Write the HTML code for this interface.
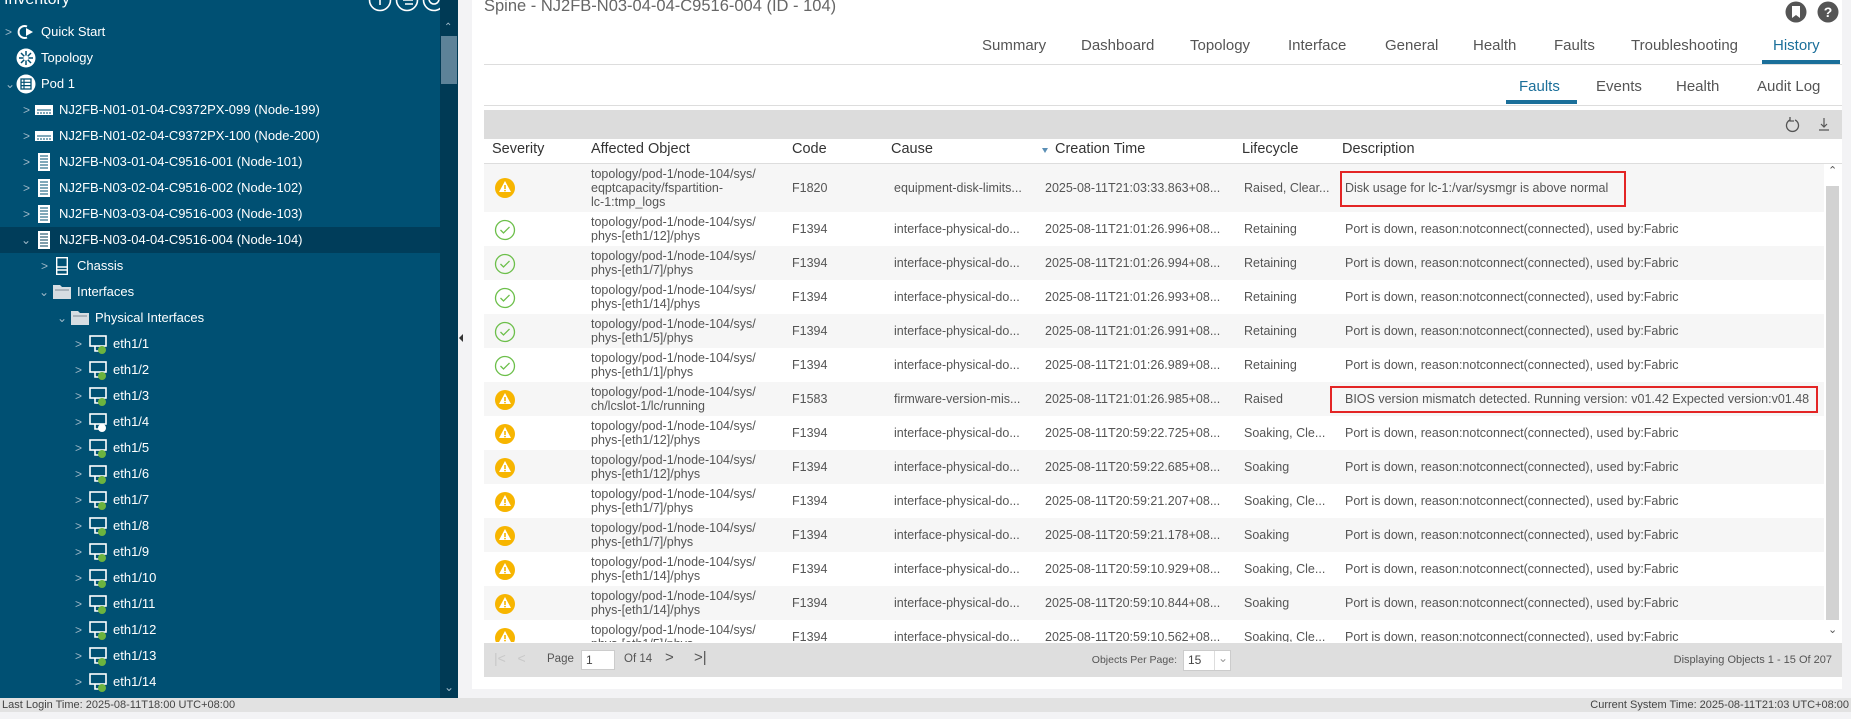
<!DOCTYPE html>
<html><head><meta charset="utf-8">
<style>
*{margin:0;padding:0;box-sizing:border-box}
body{width:1851px;height:719px;overflow:hidden;background:#f3f3f5;font-family:"Liberation Sans",sans-serif;position:relative;color:#555}
.abs{position:absolute}
#side{left:0;top:0;width:440px;height:698px;background:#005073;overflow:hidden}
#sbar{left:440px;top:0;width:18px;height:698px;background:#003a55}
#sthumb{left:441px;top:36px;width:16px;height:48px;background:#5d8298}
.tr{position:absolute;left:0;width:440px;height:26px;color:#fff;font-size:13px;line-height:26px;white-space:nowrap}
.tr .ch{position:absolute;top:0;color:#9fb9c8;font-size:12px}
.tr .ic{position:absolute;top:5px}
.tr .tx{position:absolute;top:0}
.sel{background:#003d5a}
.tab{position:absolute;top:37px;font-size:15px;color:#555;white-space:nowrap}
.stab{position:absolute;top:78px;font-size:15px;color:#555}
.hd{position:absolute;top:141px;font-size:14.5px;color:#333}
.row{position:absolute;left:0;width:1410px;height:34px;font-size:12.5px;color:#555}
.row.g{background:#f6f6f6}
.row div{position:absolute;white-space:nowrap}
.ao{left:107px;top:3px;line-height:14px}
.cd{left:308px;top:10px}
.cs{left:410px;top:10px}
.ct{left:561px;top:10px}
.lc{left:760px;top:10px}
.ds{left:861px;top:10px}
.sv{left:10px;top:7px}
</style></head><body>

<!-- Sidebar -->
<div id="side" class="abs">
  <div class="abs" style="left:4px;top:-9px;color:#fff;font-size:16px">Inventory</div>
  <svg class="abs" style="left:368px;top:-10px" width="72" height="24"><g fill="none" stroke="#fff" stroke-width="1.6"><circle cx="12" cy="10" r="10.5"/><circle cx="39" cy="10" r="10.5"/><circle cx="66" cy="10" r="10.5"/><path d="M12 3v12M33 6h12M35 10h10M37 14h8M61 9a5 5 0 1 0 10 0"/></g></svg>

  <div class="tr" style="top:19px"><span class="ch" style="left:5px">&gt;</span>
    <svg class="ic" style="left:16px" width="20" height="16"><path d="M11 2.5A6 6 0 1 0 11 13.5" fill="none" stroke="#fff" stroke-width="2"/><path d="M10 4l7 4-7 4z" fill="#fff"/></svg><span class="tx" style="left:41px">Quick Start</span></div>
  <div class="tr" style="top:45px">
    <svg class="ic" style="left:16px;top:3px" width="20" height="20"><circle cx="10" cy="10" r="9.5" fill="#fff"/><g stroke="#005073" stroke-width="1.5"><path d="M10 3v14M3 10h14M5 5l10 10M15 5L5 15"/></g><circle cx="10" cy="10" r="2.5" fill="#fff"/></svg><span class="tx" style="left:41px">Topology</span></div>
  <div class="tr" style="top:71px"><span class="ch" style="left:5px">&#8964;</span>
    <svg class="ic" style="left:16px;top:3px" width="20" height="20"><circle cx="10" cy="10" r="9.5" fill="#fff"/><rect x="5" y="5" width="10" height="10" fill="none" stroke="#005073" stroke-width="1.3"/><path d="M5 8.3h10M5 11.6h10M8 5v10" stroke="#005073" stroke-width="1.2"/></svg><span class="tx" style="left:41px">Pod 1</span></div>

  <div class="tr" style="top:97px"><span class="ch" style="left:23px">&gt;</span><svg class="ic" style="left:35px;top:8px" width="18" height="10"><rect width="18" height="10" fill="#fff"/><path d="M2 5h14M3 7v2M6 7v2M9 7v2M12 7v2M15 7v2" stroke="#005073"/></svg><span class="tx" style="left:59px">NJ2FB-N01-01-04-C9372PX-099 (Node-199)</span></div>
  <div class="tr" style="top:123px"><span class="ch" style="left:23px">&gt;</span><svg class="ic" style="left:35px;top:8px" width="18" height="10"><rect width="18" height="10" fill="#fff"/><path d="M2 5h14M3 7v2M6 7v2M9 7v2M12 7v2M15 7v2" stroke="#005073"/></svg><span class="tx" style="left:59px">NJ2FB-N01-02-04-C9372PX-100 (Node-200)</span></div>
  <div class="tr" style="top:149px"><span class="ch" style="left:23px">&gt;</span><svg class="ic" style="left:38px;top:4px" width="12" height="18"><rect width="12" height="18" fill="#fff"/><path d="M2 3h8M2 6h8M2 9h8M2 12h8M2 15h8" stroke="#005073"/></svg><span class="tx" style="left:59px">NJ2FB-N03-01-04-C9516-001 (Node-101)</span></div>
  <div class="tr" style="top:175px"><span class="ch" style="left:23px">&gt;</span><svg class="ic" style="left:38px;top:4px" width="12" height="18"><rect width="12" height="18" fill="#fff"/><path d="M2 3h8M2 6h8M2 9h8M2 12h8M2 15h8" stroke="#005073"/></svg><span class="tx" style="left:59px">NJ2FB-N03-02-04-C9516-002 (Node-102)</span></div>
  <div class="tr" style="top:201px"><span class="ch" style="left:23px">&gt;</span><svg class="ic" style="left:38px;top:4px" width="12" height="18"><rect width="12" height="18" fill="#fff"/><path d="M2 3h8M2 6h8M2 9h8M2 12h8M2 15h8" stroke="#005073"/></svg><span class="tx" style="left:59px">NJ2FB-N03-03-04-C9516-003 (Node-103)</span></div>
  <div class="tr sel" style="top:227px"><span class="ch" style="left:21px">&#8964;</span><svg class="ic" style="left:38px;top:4px" width="12" height="18"><rect width="12" height="18" fill="#fff"/><path d="M2 3h8M2 6h8M2 9h8M2 12h8M2 15h8" stroke="#003d5a"/></svg><span class="tx" style="left:59px">NJ2FB-N03-04-04-C9516-004 (Node-104)</span></div>
  <div class="tr" style="top:253px"><span class="ch" style="left:41px">&gt;</span><svg class="ic" style="left:56px;top:4px" width="12" height="18"><rect x="0.7" y="0.7" width="10.6" height="16.6" fill="none" stroke="#fff" stroke-width="1.4"/><path d="M1 10h10M1 13h10" stroke="#fff" stroke-width="1.4"/></svg><span class="tx" style="left:77px">Chassis</span></div>
  <div class="tr" style="top:279px"><span class="ch" style="left:39px">&#8964;</span><svg class="ic" style="left:53px;top:6px" width="18" height="14"><path d="M0 0h7l2 2h9v12H0z" fill="#d6dde2"/><path d="M2 5h14" stroke="#7d8c96"/></svg><span class="tx" style="left:77px">Interfaces</span></div>
  <div class="tr" style="top:305px"><span class="ch" style="left:57px">&#8964;</span><svg class="ic" style="left:71px;top:6px" width="18" height="14"><path d="M0 0h7l2 2h9v12H0z" fill="#d6dde2"/><path d="M2 5h14" stroke="#7d8c96"/></svg><span class="tx" style="left:95px">Physical Interfaces</span></div>

  <div class="tr" style="top:331px"><span class="ch" style="left:75px">&gt;</span><svg class="ic" style="left:89px;top:4px" width="20" height="20"><rect x="1" y="1" width="16" height="10" fill="none" stroke="#fff" stroke-width="1.6"/><path d="M6 11v5h5" stroke="#fff" stroke-width="1.6" fill="none"/><circle cx="13" cy="15" r="4" fill="#6cb33f"/></svg><span class="tx" style="left:113px">eth1/1</span></div>
  <div class="tr" style="top:357px"><span class="ch" style="left:75px">&gt;</span><svg class="ic" style="left:89px;top:4px" width="20" height="20"><rect x="1" y="1" width="16" height="10" fill="none" stroke="#fff" stroke-width="1.6"/><path d="M6 11v5h5" stroke="#fff" stroke-width="1.6" fill="none"/><circle cx="13" cy="15" r="4" fill="#6cb33f"/></svg><span class="tx" style="left:113px">eth1/2</span></div>
  <div class="tr" style="top:383px"><span class="ch" style="left:75px">&gt;</span><svg class="ic" style="left:89px;top:4px" width="20" height="20"><rect x="1" y="1" width="16" height="10" fill="none" stroke="#fff" stroke-width="1.6"/><path d="M6 11v5h5" stroke="#fff" stroke-width="1.6" fill="none"/><circle cx="13" cy="15" r="4" fill="#6cb33f"/></svg><span class="tx" style="left:113px">eth1/3</span></div>
  <div class="tr" style="top:409px"><span class="ch" style="left:75px">&gt;</span><svg class="ic" style="left:89px;top:4px" width="20" height="20"><rect x="1" y="1" width="16" height="10" fill="none" stroke="#fff" stroke-width="1.6"/><path d="M6 11v5h5" stroke="#fff" stroke-width="1.6" fill="none"/><circle cx="13" cy="15" r="4" fill="#fff"/></svg><span class="tx" style="left:113px">eth1/4</span></div>
  <div class="tr" style="top:435px"><span class="ch" style="left:75px">&gt;</span><svg class="ic" style="left:89px;top:4px" width="20" height="20"><rect x="1" y="1" width="16" height="10" fill="none" stroke="#fff" stroke-width="1.6"/><path d="M6 11v5h5" stroke="#fff" stroke-width="1.6" fill="none"/><circle cx="13" cy="15" r="4" fill="#6cb33f"/></svg><span class="tx" style="left:113px">eth1/5</span></div>
  <div class="tr" style="top:461px"><span class="ch" style="left:75px">&gt;</span><svg class="ic" style="left:89px;top:4px" width="20" height="20"><rect x="1" y="1" width="16" height="10" fill="none" stroke="#fff" stroke-width="1.6"/><path d="M6 11v5h5" stroke="#fff" stroke-width="1.6" fill="none"/><circle cx="13" cy="15" r="4" fill="#6cb33f"/></svg><span class="tx" style="left:113px">eth1/6</span></div>
  <div class="tr" style="top:487px"><span class="ch" style="left:75px">&gt;</span><svg class="ic" style="left:89px;top:4px" width="20" height="20"><rect x="1" y="1" width="16" height="10" fill="none" stroke="#fff" stroke-width="1.6"/><path d="M6 11v5h5" stroke="#fff" stroke-width="1.6" fill="none"/><circle cx="13" cy="15" r="4" fill="#6cb33f"/></svg><span class="tx" style="left:113px">eth1/7</span></div>
  <div class="tr" style="top:513px"><span class="ch" style="left:75px">&gt;</span><svg class="ic" style="left:89px;top:4px" width="20" height="20"><rect x="1" y="1" width="16" height="10" fill="none" stroke="#fff" stroke-width="1.6"/><path d="M6 11v5h5" stroke="#fff" stroke-width="1.6" fill="none"/><circle cx="13" cy="15" r="4" fill="#6cb33f"/></svg><span class="tx" style="left:113px">eth1/8</span></div>
  <div class="tr" style="top:539px"><span class="ch" style="left:75px">&gt;</span><svg class="ic" style="left:89px;top:4px" width="20" height="20"><rect x="1" y="1" width="16" height="10" fill="none" stroke="#fff" stroke-width="1.6"/><path d="M6 11v5h5" stroke="#fff" stroke-width="1.6" fill="none"/><circle cx="13" cy="15" r="4" fill="#6cb33f"/></svg><span class="tx" style="left:113px">eth1/9</span></div>
  <div class="tr" style="top:565px"><span class="ch" style="left:75px">&gt;</span><svg class="ic" style="left:89px;top:4px" width="20" height="20"><rect x="1" y="1" width="16" height="10" fill="none" stroke="#fff" stroke-width="1.6"/><path d="M6 11v5h5" stroke="#fff" stroke-width="1.6" fill="none"/><circle cx="13" cy="15" r="4" fill="#6cb33f"/></svg><span class="tx" style="left:113px">eth1/10</span></div>
  <div class="tr" style="top:591px"><span class="ch" style="left:75px">&gt;</span><svg class="ic" style="left:89px;top:4px" width="20" height="20"><rect x="1" y="1" width="16" height="10" fill="none" stroke="#fff" stroke-width="1.6"/><path d="M6 11v5h5" stroke="#fff" stroke-width="1.6" fill="none"/><circle cx="13" cy="15" r="4" fill="#6cb33f"/></svg><span class="tx" style="left:113px">eth1/11</span></div>
  <div class="tr" style="top:617px"><span class="ch" style="left:75px">&gt;</span><svg class="ic" style="left:89px;top:4px" width="20" height="20"><rect x="1" y="1" width="16" height="10" fill="none" stroke="#fff" stroke-width="1.6"/><path d="M6 11v5h5" stroke="#fff" stroke-width="1.6" fill="none"/><circle cx="13" cy="15" r="4" fill="#6cb33f"/></svg><span class="tx" style="left:113px">eth1/12</span></div>
  <div class="tr" style="top:643px"><span class="ch" style="left:75px">&gt;</span><svg class="ic" style="left:89px;top:4px" width="20" height="20"><rect x="1" y="1" width="16" height="10" fill="none" stroke="#fff" stroke-width="1.6"/><path d="M6 11v5h5" stroke="#fff" stroke-width="1.6" fill="none"/><circle cx="13" cy="15" r="4" fill="#6cb33f"/></svg><span class="tx" style="left:113px">eth1/13</span></div>
  <div class="tr" style="top:669px"><span class="ch" style="left:75px">&gt;</span><svg class="ic" style="left:89px;top:4px" width="20" height="20"><rect x="1" y="1" width="16" height="10" fill="none" stroke="#fff" stroke-width="1.6"/><path d="M6 11v5h5" stroke="#fff" stroke-width="1.6" fill="none"/><circle cx="13" cy="15" r="4" fill="#6cb33f"/></svg><span class="tx" style="left:113px">eth1/14</span></div>
</div>
<div id="sbar" class="abs"></div>
<div id="sthumb" class="abs"></div>
<div class="abs" style="left:444px;top:22px;color:#9fb9c8;font-size:10px">&#8963;</div>
<div class="abs" style="left:444px;top:680px;color:#9fb9c8;font-size:12px">&#8964;</div>
<div class="abs" style="left:459px;top:334px;width:0;height:0;border-top:4px solid transparent;border-bottom:4px solid transparent;border-right:4px solid #333"></div>

<!-- Main panel -->
<div class="abs" style="left:472px;top:0;width:1370px;height:689px;background:#fff"></div>
<div class="abs" style="left:484px;top:-3px;font-size:16.5px;color:#666;white-space:nowrap">Spine - NJ2FB-N03-04-04-C9516-004 (ID - 104)</div>
<svg class="abs" style="left:1785px;top:1px" width="56" height="24"><circle cx="11" cy="11" r="10.5" fill="#555"/><path d="M7 5h8v12l-4-3-4 3z" fill="#fff"/><circle cx="43" cy="11" r="10.5" fill="#555"/><text x="43" y="16" fill="#fff" font-size="14" font-weight="bold" text-anchor="middle" font-family="Liberation Sans">?</text></svg>

<div class="tab" style="left:982px">Summary</div>
<div class="tab" style="left:1081px">Dashboard</div>
<div class="tab" style="left:1190px">Topology</div>
<div class="tab" style="left:1288px">Interface</div>
<div class="tab" style="left:1385px">General</div>
<div class="tab" style="left:1473px">Health</div>
<div class="tab" style="left:1554px">Faults</div>
<div class="tab" style="left:1631px">Troubleshooting</div>
<div class="tab" style="left:1773px;color:#1b6f9a">History</div>
<div class="abs" style="left:484px;top:64px;width:1358px;height:1px;background:#ddd"></div>
<div class="abs" style="left:1762px;top:60px;width:78px;height:4px;background:#1b6f9a"></div>

<div class="stab" style="left:1519px;color:#1b6f9a">Faults</div>
<div class="stab" style="left:1596px">Events</div>
<div class="stab" style="left:1676px">Health</div>
<div class="stab" style="left:1757px">Audit Log</div>
<div class="abs" style="left:484px;top:105px;width:1358px;height:1px;background:#ddd"></div>
<div class="abs" style="left:1506px;top:100px;width:71px;height:4px;background:#1b6f9a"></div>

<!-- toolbar -->
<div class="abs" style="left:484px;top:110px;width:1358px;height:29px;background:#dcdcdc"></div>
<svg class="abs" style="left:1782px;top:114px" width="52" height="20"><path d="M13 6a6 6 0 1 1-5 0" fill="none" stroke="#555" stroke-width="1.3"/><path d="M8 3v4h4" fill="none" stroke="#555" stroke-width="1.3"/><path d="M42 4v9M39 10l3 3 3-3M37 16h10" fill="none" stroke="#555" stroke-width="1.2"/></svg>

<!-- header -->
<div class="abs" style="left:484px;top:139px;width:1358px;height:25px;background:#fff;border-bottom:1px solid #ddd"></div>
<div class="hd" style="left:492px">Severity</div>
<div class="hd" style="left:591px">Affected Object</div>
<div class="hd" style="left:792px">Code</div>
<div class="hd" style="left:891px">Cause</div>
<div class="abs" style="left:1042px;top:148px;width:0;height:0;border-left:3.5px solid transparent;border-right:3.5px solid transparent;border-top:5px solid #5b8fb5"></div>
<div class="hd" style="left:1055px">Creation Time</div>
<div class="hd" style="left:1242px">Lifecycle</div>
<div class="hd" style="left:1342px">Description</div>

<!-- body -->
<div class="abs" style="left:484px;top:164px;width:1340px;height:478px;overflow:hidden">
 <div class="row g" style="top:0;height:48px"><div class="sv" style="top:13px"><svg width="22" height="22"><circle cx="11" cy="11" r="10" fill="#f7b500"/><path d="M11 4l6 11H5z" fill="#fff"/><path d="M11 8v4" stroke="#f7b500" stroke-width="1.6"/><circle cx="11" cy="13.6" r="0.9" fill="#f7b500"/></svg></div><div class="ao">topology/pod-1/node-104/sys/<br>eqptcapacity/fspartition-<br>lc-1:tmp_logs</div><div class="cd" style="top:17px">F1820</div><div class="cs" style="top:17px">equipment-disk-limits...</div><div class="ct" style="top:17px">2025-08-11T21:03:33.863+08...</div><div class="lc" style="top:17px">Raised, Clear...</div><div class="ds" style="top:17px">Disk usage for lc-1:/var/sysmgr is above normal</div></div>

 <div class="row" style="top:48px"><div class="sv"><svg width="22" height="22"><circle cx="11" cy="11" r="9.5" fill="none" stroke="#6cbf4a" stroke-width="1.3"/><path d="M6.5 11l3 3 6-6" fill="none" stroke="#6cbf4a" stroke-width="1.3"/></svg></div><div class="ao">topology/pod-1/node-104/sys/<br>phys-[eth1/12]/phys</div><div class="cd">F1394</div><div class="cs">interface-physical-do...</div><div class="ct">2025-08-11T21:01:26.996+08...</div><div class="lc">Retaining</div><div class="ds">Port is down, reason:notconnect(connected), used by:Fabric</div></div>
 <div class="row g" style="top:82px"><div class="sv"><svg width="22" height="22"><circle cx="11" cy="11" r="9.5" fill="none" stroke="#6cbf4a" stroke-width="1.3"/><path d="M6.5 11l3 3 6-6" fill="none" stroke="#6cbf4a" stroke-width="1.3"/></svg></div><div class="ao">topology/pod-1/node-104/sys/<br>phys-[eth1/7]/phys</div><div class="cd">F1394</div><div class="cs">interface-physical-do...</div><div class="ct">2025-08-11T21:01:26.994+08...</div><div class="lc">Retaining</div><div class="ds">Port is down, reason:notconnect(connected), used by:Fabric</div></div>
 <div class="row" style="top:116px"><div class="sv"><svg width="22" height="22"><circle cx="11" cy="11" r="9.5" fill="none" stroke="#6cbf4a" stroke-width="1.3"/><path d="M6.5 11l3 3 6-6" fill="none" stroke="#6cbf4a" stroke-width="1.3"/></svg></div><div class="ao">topology/pod-1/node-104/sys/<br>phys-[eth1/14]/phys</div><div class="cd">F1394</div><div class="cs">interface-physical-do...</div><div class="ct">2025-08-11T21:01:26.993+08...</div><div class="lc">Retaining</div><div class="ds">Port is down, reason:notconnect(connected), used by:Fabric</div></div>
 <div class="row g" style="top:150px"><div class="sv"><svg width="22" height="22"><circle cx="11" cy="11" r="9.5" fill="none" stroke="#6cbf4a" stroke-width="1.3"/><path d="M6.5 11l3 3 6-6" fill="none" stroke="#6cbf4a" stroke-width="1.3"/></svg></div><div class="ao">topology/pod-1/node-104/sys/<br>phys-[eth1/5]/phys</div><div class="cd">F1394</div><div class="cs">interface-physical-do...</div><div class="ct">2025-08-11T21:01:26.991+08...</div><div class="lc">Retaining</div><div class="ds">Port is down, reason:notconnect(connected), used by:Fabric</div></div>
 <div class="row" style="top:184px"><div class="sv"><svg width="22" height="22"><circle cx="11" cy="11" r="9.5" fill="none" stroke="#6cbf4a" stroke-width="1.3"/><path d="M6.5 11l3 3 6-6" fill="none" stroke="#6cbf4a" stroke-width="1.3"/></svg></div><div class="ao">topology/pod-1/node-104/sys/<br>phys-[eth1/1]/phys</div><div class="cd">F1394</div><div class="cs">interface-physical-do...</div><div class="ct">2025-08-11T21:01:26.989+08...</div><div class="lc">Retaining</div><div class="ds">Port is down, reason:notconnect(connected), used by:Fabric</div></div>
 <div class="row g" style="top:218px"><div class="sv"><svg width="22" height="22"><circle cx="11" cy="11" r="10" fill="#f7b500"/><path d="M11 4l6 11H5z" fill="#fff"/><path d="M11 8v4" stroke="#f7b500" stroke-width="1.6"/><circle cx="11" cy="13.6" r="0.9" fill="#f7b500"/></svg></div><div class="ao">topology/pod-1/node-104/sys/<br>ch/lcslot-1/lc/running</div><div class="cd">F1583</div><div class="cs">firmware-version-mis...</div><div class="ct">2025-08-11T21:01:26.985+08...</div><div class="lc">Raised</div><div class="ds">BIOS version mismatch detected. Running version: v01.42 Expected version:v01.48</div></div>
 <div class="row" style="top:252px"><div class="sv"><svg width="22" height="22"><circle cx="11" cy="11" r="10" fill="#f7b500"/><path d="M11 4l6 11H5z" fill="#fff"/><path d="M11 8v4" stroke="#f7b500" stroke-width="1.6"/><circle cx="11" cy="13.6" r="0.9" fill="#f7b500"/></svg></div><div class="ao">topology/pod-1/node-104/sys/<br>phys-[eth1/12]/phys</div><div class="cd">F1394</div><div class="cs">interface-physical-do...</div><div class="ct">2025-08-11T20:59:22.725+08...</div><div class="lc">Soaking, Cle...</div><div class="ds">Port is down, reason:notconnect(connected), used by:Fabric</div></div>
 <div class="row g" style="top:286px"><div class="sv"><svg width="22" height="22"><circle cx="11" cy="11" r="10" fill="#f7b500"/><path d="M11 4l6 11H5z" fill="#fff"/><path d="M11 8v4" stroke="#f7b500" stroke-width="1.6"/><circle cx="11" cy="13.6" r="0.9" fill="#f7b500"/></svg></div><div class="ao">topology/pod-1/node-104/sys/<br>phys-[eth1/12]/phys</div><div class="cd">F1394</div><div class="cs">interface-physical-do...</div><div class="ct">2025-08-11T20:59:22.685+08...</div><div class="lc">Soaking</div><div class="ds">Port is down, reason:notconnect(connected), used by:Fabric</div></div>
 <div class="row" style="top:320px"><div class="sv"><svg width="22" height="22"><circle cx="11" cy="11" r="10" fill="#f7b500"/><path d="M11 4l6 11H5z" fill="#fff"/><path d="M11 8v4" stroke="#f7b500" stroke-width="1.6"/><circle cx="11" cy="13.6" r="0.9" fill="#f7b500"/></svg></div><div class="ao">topology/pod-1/node-104/sys/<br>phys-[eth1/7]/phys</div><div class="cd">F1394</div><div class="cs">interface-physical-do...</div><div class="ct">2025-08-11T20:59:21.207+08...</div><div class="lc">Soaking, Cle...</div><div class="ds">Port is down, reason:notconnect(connected), used by:Fabric</div></div>
 <div class="row g" style="top:354px"><div class="sv"><svg width="22" height="22"><circle cx="11" cy="11" r="10" fill="#f7b500"/><path d="M11 4l6 11H5z" fill="#fff"/><path d="M11 8v4" stroke="#f7b500" stroke-width="1.6"/><circle cx="11" cy="13.6" r="0.9" fill="#f7b500"/></svg></div><div class="ao">topology/pod-1/node-104/sys/<br>phys-[eth1/7]/phys</div><div class="cd">F1394</div><div class="cs">interface-physical-do...</div><div class="ct">2025-08-11T20:59:21.178+08...</div><div class="lc">Soaking</div><div class="ds">Port is down, reason:notconnect(connected), used by:Fabric</div></div>
 <div class="row" style="top:388px"><div class="sv"><svg width="22" height="22"><circle cx="11" cy="11" r="10" fill="#f7b500"/><path d="M11 4l6 11H5z" fill="#fff"/><path d="M11 8v4" stroke="#f7b500" stroke-width="1.6"/><circle cx="11" cy="13.6" r="0.9" fill="#f7b500"/></svg></div><div class="ao">topology/pod-1/node-104/sys/<br>phys-[eth1/14]/phys</div><div class="cd">F1394</div><div class="cs">interface-physical-do...</div><div class="ct">2025-08-11T20:59:10.929+08...</div><div class="lc">Soaking, Cle...</div><div class="ds">Port is down, reason:notconnect(connected), used by:Fabric</div></div>
 <div class="row g" style="top:422px"><div class="sv"><svg width="22" height="22"><circle cx="11" cy="11" r="10" fill="#f7b500"/><path d="M11 4l6 11H5z" fill="#fff"/><path d="M11 8v4" stroke="#f7b500" stroke-width="1.6"/><circle cx="11" cy="13.6" r="0.9" fill="#f7b500"/></svg></div><div class="ao">topology/pod-1/node-104/sys/<br>phys-[eth1/14]/phys</div><div class="cd">F1394</div><div class="cs">interface-physical-do...</div><div class="ct">2025-08-11T20:59:10.844+08...</div><div class="lc">Soaking</div><div class="ds">Port is down, reason:notconnect(connected), used by:Fabric</div></div>
 <div class="row" style="top:456px"><div class="sv"><svg width="22" height="22"><circle cx="11" cy="11" r="10" fill="#f7b500"/><path d="M11 4l6 11H5z" fill="#fff"/><path d="M11 8v4" stroke="#f7b500" stroke-width="1.6"/><circle cx="11" cy="13.6" r="0.9" fill="#f7b500"/></svg></div><div class="ao">topology/pod-1/node-104/sys/<br>phys-[eth1/5]/phys</div><div class="cd">F1394</div><div class="cs">interface-physical-do...</div><div class="ct">2025-08-11T20:59:10.562+08...</div><div class="lc">Soaking, Cle...</div><div class="ds">Port is down, reason:notconnect(connected), used by:Fabric</div></div>
</div>
<!-- body scrollbar -->
<div class="abs" style="left:1824px;top:164px;width:16px;height:478px;background:#fff"></div>
<div class="abs" style="left:1826px;top:186px;width:13px;height:434px;background:#d2d2d2"></div>
<div class="abs" style="left:1828px;top:164px;font-size:11px;color:#555">&#8963;</div>
<div class="abs" style="left:1828px;top:623px;font-size:11px;color:#555">&#8964;</div>

<!-- red boxes -->
<div class="abs" style="left:1340px;top:171px;width:286px;height:36px;border:2px solid #e32525"></div>
<div class="abs" style="left:1330px;top:386px;width:488px;height:27px;border:2px solid #e32525"></div>

<!-- footer -->
<div class="abs" style="left:484px;top:643px;width:1358px;height:34px;background:#dedede"></div>
<div class="abs" style="left:494px;top:650px;font-size:14px;color:#c8c8c8">|&lt;&nbsp;&nbsp;&nbsp;&lt;</div>
<div class="abs" style="left:547px;top:653px;font-size:11.5px;color:#555">Page</div>
<div class="abs" style="left:581px;top:650px;width:34px;height:20px;background:#fff;border:1px solid #ccc;font-size:12px;padding:2px 4px;color:#444">1</div>
<div class="abs" style="left:624px;top:653px;font-size:11.5px;color:#555">Of 14</div>
<div class="abs" style="left:665px;top:649px;font-size:15px;color:#555">&gt;</div>
<div class="abs" style="left:694px;top:649px;font-size:15px;color:#555">&gt;|</div>
<div class="abs" style="left:1060px;width:117px;text-align:right;top:654px;font-size:10.5px;color:#555;white-space:nowrap">Objects Per Page:</div>
<div class="abs" style="left:1183px;top:650px;width:48px;height:21px;background:#fff;border:1px solid #ccc;font-size:12px;padding:2px 4px;color:#444">15<span style="position:absolute;left:30px;top:0;height:19px;border-left:1px solid #ddd;padding-left:3px;color:#999">&#8964;</span></div>
<div class="abs" style="left:1600px;top:654px;width:232px;text-align:right;font-size:11px;color:#555">Displaying Objects 1 - 15 Of 207</div>

<!-- status bar -->
<div class="abs" style="left:0;top:698px;width:1851px;height:14px;background:#e2e2e2"></div>
<div class="abs" style="left:2px;top:699px;font-size:11px;color:#444">Last Login Time: 2025-08-11T18:00 UTC+08:00</div>
<div class="abs" style="right:2px;top:699px;font-size:11px;color:#444">Current System Time: 2025-08-11T21:03 UTC+08:00</div>
</body></html>
